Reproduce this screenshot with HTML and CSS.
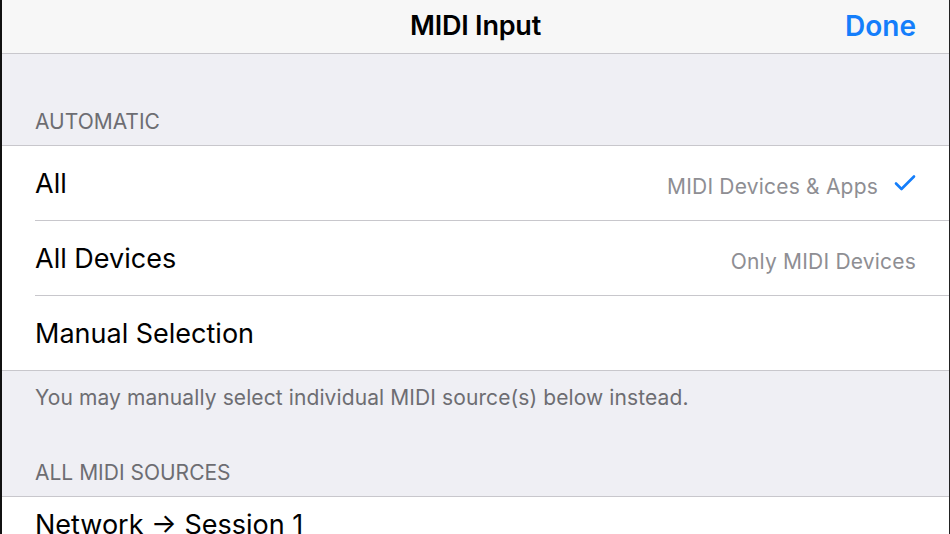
FILE: index.html
```html
<!DOCTYPE html>
<html lang="en">

<head>
    <meta charset="UTF-8">
    <meta name="viewport" content="width=device-width, initial-scale=1.0">
    <title>MIDI Input</title>
    <link rel="stylesheet" href="styles.css">
</head>

<body>
    <div class="screen">
        <header class="navbar">
            <div class="nav-side"></div>
            <h1 class="nav-title">MIDI Input</h1>
            <div class="nav-side nav-right"><a href="#" class="done">Done</a></div>
        </header>

        <div class="section-header first">Automatic</div>
        <ul class="group">
            <li class="cell">
                <span class="cell-title">All</span>
                <span class="cell-detail">MIDI Devices &amp; Apps</span>
                <svg class="check" width="22" height="18" viewBox="0 0 22 18">
                    <path d="M2 9.5 L7.5 15 L20 2.5" fill="none" stroke="#147efb" stroke-width="2.6" stroke-linecap="round" stroke-linejoin="round" />
                </svg>
            </li>
            <li class="cell">
                <span class="cell-title">All Devices</span>
                <span class="cell-detail">Only MIDI Devices</span>
            </li>
            <li class="cell">
                <span class="cell-title">Manual Selection</span>
            </li>
        </ul>
        <div class="section-footer">You may manually select individual MIDI source(s) below instead.</div>

        <div class="section-header second">All MIDI Sources</div>
        <ul class="group">
            <li class="cell cell-tall">
                <span class="cell-title">Network → Session 1</span>
            </li>
        </ul>
    </div>
</body>

</html>
```

FILE: styles.css
```css
body {
    margin: 0;
    padding: 0;
    background: #efeff4;
    font-family: Inter, "Noto Sans", sans-serif;
    overflow: hidden;
}

.screen {
    height: 534px;
    border-left: 2px solid #111;
    border-right: 1px solid #222;
    box-sizing: border-box;
    background: #efeff4;
    overflow: hidden;
}

.navbar {
    display: flex;
    align-items: center;
    height: 51px;
    background: #f7f7f7;
    border-bottom: 1px solid #c8c7cc;
    padding: 0 33px 2px;
}

.nav-side {
    flex: 1;
}

.nav-right {
    display: flex;
    justify-content: flex-end;
}

.nav-title {
    margin: 0;
    font-size: 27px;
    font-weight: 600;
    color: #000;
    letter-spacing: -0.2px;
}

.done {
    color: #147efb;
    font-size: 28px;
    font-weight: 600;
    text-decoration: none;
}

.section-header {
    height: 46px;
    padding: 0 33px 3px;
    display: flex;
    align-items: center;
    font-size: 21px;
    color: #6d6d72;
    text-transform: uppercase;
    border-bottom: 1px solid #c8c7cc;
    box-sizing: border-box;
}

.section-header.first {
    margin-top: 46px;
}

.section-header.second {
    margin-top: 40px;
}

.group {
    list-style: none;
    margin: 0;
    padding: 0;
    background: #fff;
    border-bottom: 1px solid #c8c7cc;
}

.cell {
    display: flex;
    align-items: center;
    height: 75px;
    margin-left: 33px;
    padding-right: 33px;
    border-bottom: 1px solid #c8c7cc;
    box-sizing: border-box;
}

.cell:last-child {
    border-bottom: none;
    height: 74px;
}

.cell-tall {
    align-items: flex-start;
    padding-top: 11px;
}

.cell-title {
    flex: 1;
    font-size: 27px;
    color: #000;
}

.cell-detail {
    font-size: 21px;
    letter-spacing: 0.2px;
    color: #8e8e93;
    padding-top: 7px;
}

.check {
    margin-left: 16px;
    margin-top: -1px;
}

.section-footer {
    padding: 14px 33px 0;
    font-size: 21px;
    letter-spacing: 0.1px;
    color: #6d6d72;
    line-height: 26px;
}
```
